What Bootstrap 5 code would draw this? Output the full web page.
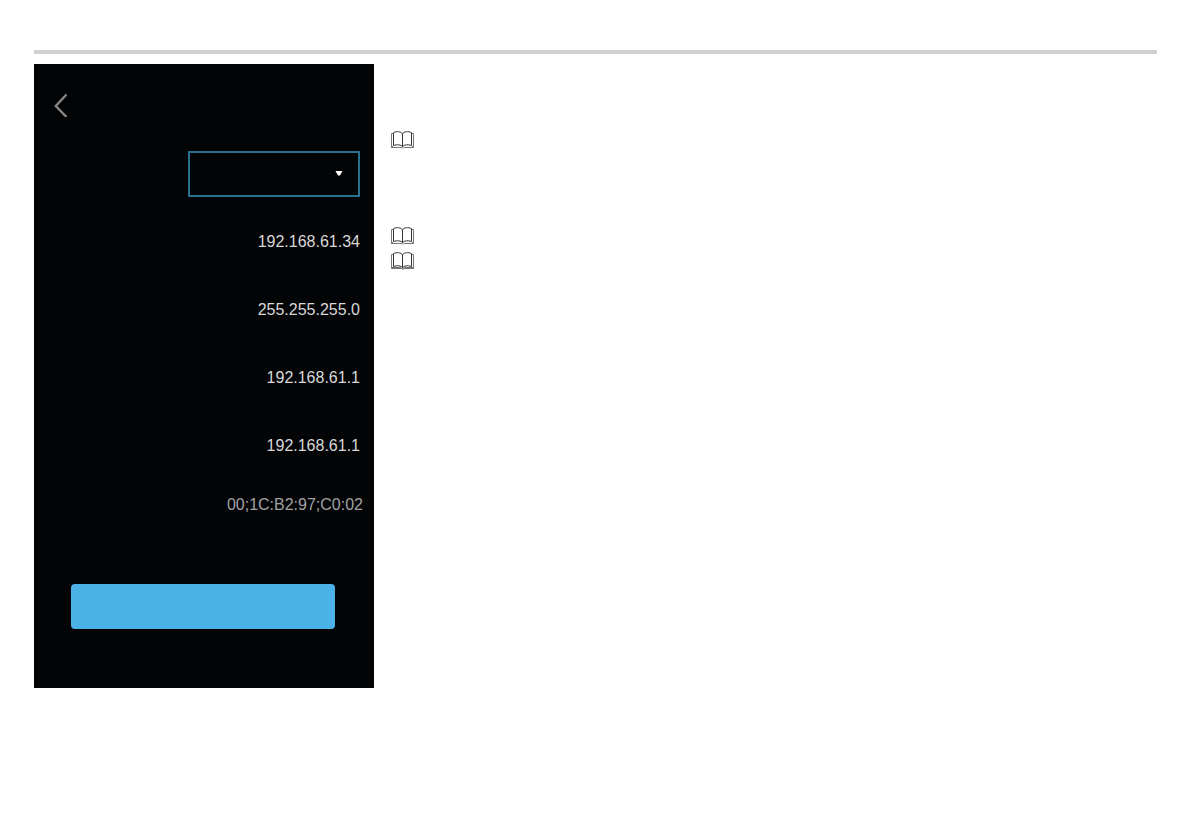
<!DOCTYPE html>
<html lang="en">
<head>
<meta charset="utf-8">
<meta name="viewport" content="width=device-width, initial-scale=1">
<title>Network settings</title>
<link href="https://cdn.jsdelivr.net/npm/bootstrap@5.3.0/dist/css/bootstrap.min.css" rel="stylesheet">
<style>
  body { font-family: "Liberation Sans", Arial, sans-serif; font-size: 16px; line-height: 24px; background: #fff; }
  .page { padding: 50px 34px 24px; }
  .rule { height: 4px; background: #d0d0d0; }
  .content { gap: 17px; margin-top: 10px; }
  .phone { width: 340px; background: #030406; color: #d8d8d8; padding: 0 14px 59px; }
  .phone-head { height: 76px; padding: 28px 0 0 6px; }
  .back { line-height: 0; }
  .setting { height: 68px; }
  .setting-mac { height: 50px; margin-right: -3px; color: #a2a2a2; }
  .mode { width: 172px; height: 46px; background: #030406; border: 2px solid #28708f; border-radius: 0; color: #fff; appearance: none; }
  .mode-caret { right: 17px; top: 20px; pointer-events: none; }
  .apply { height: 45px; margin: 54px 25px 0 23px; background: #4bb2e8; border-radius: 4px; }
  .notes { padding-top: 67px; }
  .note-gap { margin-top: 78px; }
  .note-next { margin-top: 7px; }
</style>
</head>
<body>
<svg width="0" height="0" class="d-none" aria-hidden="true">
  <symbol id="book" viewBox="0 0 24 18">
    <g fill="none" stroke="#333" stroke-width="1">
      <path d="M2.500 2.500H.5V16.500H10.500C11.500 16.500 11 17.300 12 17.300S12.500 16.500 13.500 16.500H22.500V2.500H20.500" stroke="#777"/>
      <path d="M11.500 2.800C10 .3 5.500 .2 2.500 1.500V14.500C6 13.300 10 13.500 11.500 15.700C13 13.500 17 13.300 20.500 14.500V1.500C17.500 .2 13 .3 11.500 2.800V15.700"/>
      <path d="M2.500 14.500L.8 16.300M20.500 14.500L22.300 16.300" stroke="#666"/>
    </g>
  </symbol>
</svg>
<div class="page container-fluid">
  <header class="rule"></header>
  <div class="content d-flex align-items-start">
    <main class="phone flex-shrink-0">
      <div class="phone-head">
        <button type="button" class="back btn p-0 border-0" aria-label="Back">
          <svg width="14" height="24" viewBox="0 0 14 24" fill="none" stroke="#858585" stroke-width="2.400"><path d="M12.500 1.500L1.800 13L12.500 24"/></svg>
        </button>
      </div>
      <div class="setting d-flex align-items-center justify-content-end">
        <div class="position-relative">
          <select class="mode d-block" aria-label="Address mode"><option></option></select>
          <svg class="mode-caret position-absolute" width="8" height="5" viewBox="0 0 8 5" fill="#fff" aria-hidden="true"><path d="M.5 0H7.500L5 4.500H3Z"/></svg>
        </div>
      </div>
      <div class="setting d-flex align-items-center justify-content-end">192.168.61.34</div>
      <div class="setting d-flex align-items-center justify-content-end">255.255.255.0</div>
      <div class="setting d-flex align-items-center justify-content-end">192.168.61.1</div>
      <div class="setting d-flex align-items-center justify-content-end">192.168.61.1</div>
      <div class="setting-mac d-flex align-items-center justify-content-end">00;1C:B2:97;C0:02</div>
      <div class="d-grid">
        <button type="button" class="apply btn border-0 p-0" aria-label="Apply"></button>
      </div>
    </main>
    <aside class="notes flex-grow-1 d-flex flex-column align-items-start">
      <svg width="24" height="18" aria-hidden="true"><use href="#book"/></svg>
      <svg class="note-gap" width="24" height="18" aria-hidden="true"><use href="#book"/></svg>
      <svg class="note-next" width="24" height="18" aria-hidden="true"><use href="#book"/><path d="M2 15.500H9L11.500 17L14 15.500H21" fill="none" stroke="#777"/></svg>
    </aside>
  </div>
</div>
<script src="https://cdn.jsdelivr.net/npm/bootstrap@5.3.0/dist/js/bootstrap.bundle.min.js"></script>
</body>
</html>
